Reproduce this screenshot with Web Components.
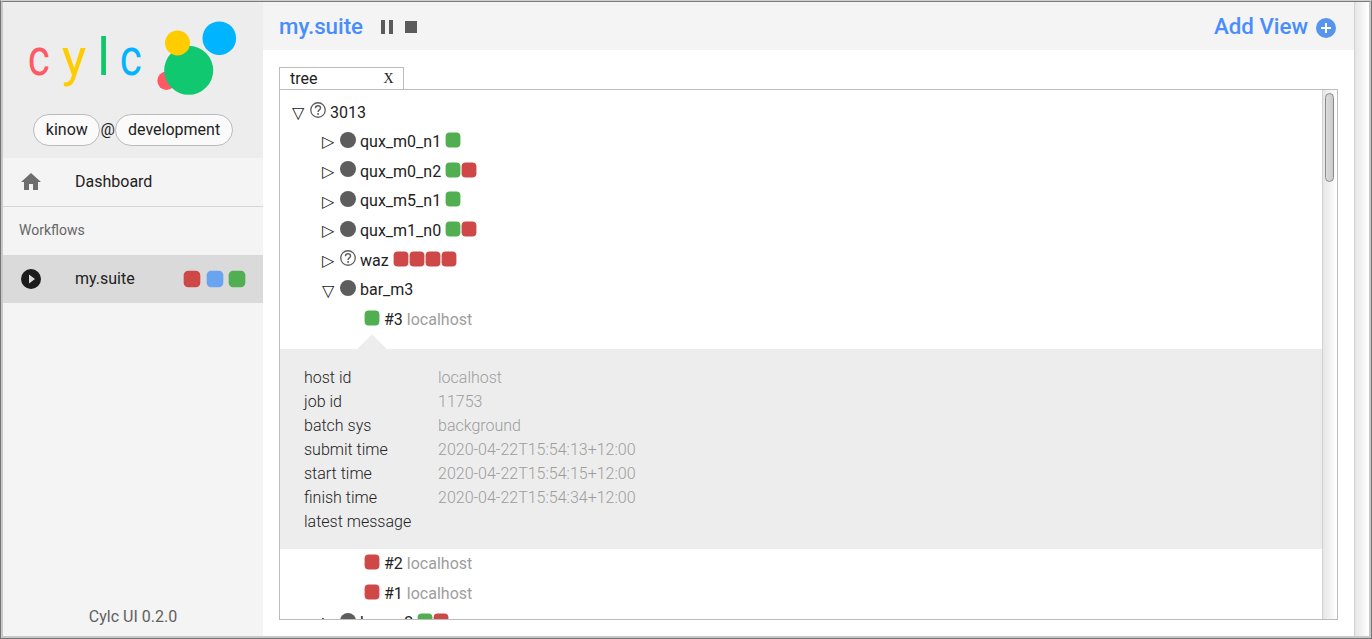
<!DOCTYPE html>
<html lang="en">
<head>
<meta charset="utf-8">
<title>Cylc UI</title>
<style>
html, body { margin: 0; height: 100%; overflow: hidden; }
body { font: 16px/24px Roboto, sans-serif; color: #222; background: #fff; }
</style>
</head>
<body>
<cylc-app></cylc-app>
<script>
const define = (name, html) => customElements.define(name, class extends HTMLElement {
  constructor() {
    super();
    this.attachShadow({ mode: 'open' });
  }
  connectedCallback() {
    const t = document.createElement('template');
    t.innerHTML = typeof html === 'function' ? html(this) : html;
    this.shadowRoot.replaceChildren(t.content.cloneNode(true));
  }
});

/* Rounded square showing a job's state */
define('job-icon', el => `
<style>
:host { display: block; flex: none; width: var(--job-size, 16px); height: var(--job-size, 16px); }
svg { display: block; width: 100%; height: 100%; }
</style>
<svg viewBox="0 0 16 16"><rect x=".6" y=".6" width="14.8" height="14.8" rx="4" fill="${
  { ok: '#51af51', fail: '#cf4848', run: '#6aa4f1' }[el.getAttribute('state')]}"/></svg>`);

define('task-icon', el => `
<style>:host { display: block; flex: none; width: 16px; height: 16px; } svg { display: block; }</style>
<svg width="16" height="16" viewBox="0 0 16 16">${el.getAttribute('state') === 'unknown'
  ? '<circle cx="8" cy="8" r="7.25" fill="none" stroke="#5d5d5d" stroke-width="1.3"/><path d="M5.5 6.2Q5.5 3.8 8 3.8Q10.5 3.8 10.5 6Q10.5 7.1 9.3 7.9Q8.1 8.7 8.1 10" fill="none" stroke="#5d5d5d" stroke-width="1.45"/><circle cx="8.1" cy="12" r=".95" fill="#5d5d5d"/>'
  : '<circle cx="8" cy="8" r="8" fill="#5d5d5d"/>'}</svg>`);

define('cylc-logo', `
<style>:host { display: block; height: 100px; } svg { display: block; }
text { font-family: Roboto, sans-serif; font-size: 52px; font-weight: 400; }</style>
<svg width="260" height="100" viewBox="3 2 260 100">
<text x="27.8" y="75.3" textLength="22" lengthAdjust="spacingAndGlyphs" fill="#ff5966">c</text>
<text x="61.8" y="75.3" textLength="24.5" lengthAdjust="spacingAndGlyphs" fill="#ffcc00">y</text>
<text x="97.2" y="75.3" fill="#10c56c">l</text>
<text x="119.8" y="75.3" textLength="22" lengthAdjust="spacingAndGlyphs" fill="#00b4ff">c</text>
<circle cx="166.5" cy="80.8" r="9.2" fill="#ff5966"/>
<circle cx="188.7" cy="70.3" r="24.5" fill="#10c870"/>
<circle cx="177.5" cy="43" r="12.5" fill="#ffcc00"/>
<circle cx="219.3" cy="38.2" r="16.8" fill="#00b4ff"/>
</svg>`);

define('user-chip', `
<style>:host { display: block; box-sizing: border-box; height: 32px; padding: 0 11.6px; line-height: 30px; border: 1px solid #bbb; border-radius: 16px; background: #fafafa; }</style><slot></slot>`);

define('nav-item', `
<style>
:host { display: flex; align-items: center; box-sizing: border-box; height: 48px; padding: 0 16px; }
:host([active]) { background: #dadada; }
.icon { width: 24px; height: 24px; margin-right: 32px; }
.label { flex: 1; }
</style>
<div class="icon"><slot name="icon"></slot></div><div class="label"><slot></slot></div><slot name="jobs"></slot>`);

define('side-bar', `
<style>
:host { display: flex; flex-direction: column; width: 260px; background: #f4f4f4; }
header { height: 156px; background: #ededed; }
.user { display: flex; justify-content: center; margin-top: 12px; }
.user span { line-height: 31px; width: 15px; }
.sub { height: 48px; line-height: 46px; padding-left: 16px; font-size: 14px; color: #666; border-top: 1px solid #d6d6d6; }
.jobs { display: flex; gap: 4.5px; --job-size: 18px; margin-right: .7px; }
footer { margin-top: auto; text-align: center; height: 31px; color: #606060; }
svg { display: block; }
</style>
<header><cylc-logo></cylc-logo>
<div class="user"><user-chip>kinow</user-chip><span>@</span><user-chip>development</user-chip></div></header>
<nav-item><svg slot="icon" width="24" height="24"><path fill="#6e6e6e" d="M10 20v-6h4v6h5v-8h3L12 3 2 12h3v8z"/></svg>Dashboard</nav-item>
<div class="sub">Workflows</div>
<nav-item active><svg slot="icon" width="24" height="24"><path fill="#1c1c1c" fill-rule="evenodd" d="M12 2a10 10 0 1 0 0 20 10 10 0 0 0 0-20zM10 7.5l6 4.5-6 4.5z"/></svg>my.suite
<div class="jobs" slot="jobs"><job-icon state="fail"></job-icon><job-icon state="run"></job-icon><job-icon state="ok"></job-icon></div></nav-item>
<footer>Cylc UI 0.2.0</footer>`);

define('tool-bar', `
<style>
:host { display: flex; align-items: center; box-sizing: border-box; height: 48px; padding: 2px 16px 0; background: #f4f4f4; color: #478dfd; font-size: 22.3px; font-weight: 500; }
span { margin-bottom: 2px; }
.pause { margin-left: 18px; } .stop { margin-left: 12px; }
.add { margin-left: auto; margin-right: 8px; }
.plus { margin-right: 2px; margin-top: 2px; }
</style>
<span>my.suite</span>
<svg class="pause" width="12" height="14" fill="#5b5b5b"><path d="M0 0h4v14H0zM8 0h4v14H8z"/></svg>
<svg class="stop" width="12" height="12" fill="#5b5b5b"><path d="M0 0h12v12H0z"/></svg>
<span class="add">Add View</span>
<svg class="plus" width="20" height="20"><circle cx="10" cy="10" r="10" fill="#5794ee"/><path d="M10 5v10M5 10h10" stroke="#fff" stroke-width="2"/></svg>`);

/* Expandable row of the task tree */
define('tree-row', el => {
  const depth = +(el.getAttribute('depth') || 0);
  const jobs = (el.getAttribute('jobs') || '').split(' ').filter(Boolean);
  return `
<style>
:host { display: flex; align-items: center; height: 29.67px; padding-left: ${12 + depth * 30}px; white-space: nowrap; }
.toggle { width: 18px; font: 16px/24px "DejaVu Sans", sans-serif; padding-top: .2px; }
task-icon { margin: 0 4px 5px 0; }
.jobs { display: flex; margin: 0 0 4px 4px; }
</style>
<span class="toggle">${el.hasAttribute('open') ? '▽' : '▷'}</span>
<task-icon state="${el.getAttribute('state') || 'waiting'}"></task-icon>
<slot></slot><div class="jobs">${jobs.map(s => `<job-icon state="${s}"></job-icon>`).join('')}</div>`;
});

define('job-row', el => `
<style>
:host { display: flex; align-items: center; height: 29.65px; padding-left: 84px; gap: 4px; }
job-icon { margin-bottom: 4px; } .host { color: #9d9d9d; }
</style>
<job-icon state="${el.getAttribute('state')}"></job-icon><slot></slot><span class="host">localhost</span>`);

define('job-details', `
<style>
:host { display: block; font-weight: 300; margin-top: -.65px; }
.arrow { width: 30px; height: 15px; margin-left: 77px; background: #ededed; clip-path: polygon(50% 0, 100% 100%, 0 100%); }
dl { display: grid; grid-template-columns: 134px 1fr; grid-auto-rows: 24px; margin: 0; padding: 16.6px 24px 15.4px; background: #ededed; }
dt, dd { margin: 0; } dd { color: #9d9d9d; }
</style>
<div class="arrow"></div>
<dl><dt>host id</dt><dd>localhost</dd><dt>job id</dt><dd>11753</dd><dt>batch sys</dt><dd>background</dd>
<dt>submit time</dt><dd>2020-04-22T15:54:13+12:00</dd><dt>start time</dt><dd>2020-04-22T15:54:15+12:00</dd>
<dt>finish time</dt><dd>2020-04-22T15:54:34+12:00</dd><dt>latest message</dt><dd></dd></dl>`);

define('scroll-track', `
<style>
:host { display: block; box-sizing: border-box; flex: none; width: 15px; padding: 3px 3px 0 2px; border-left: 1px solid #d2d2d2; background: linear-gradient(90deg, #e6e6e6, #fff); }
::slotted(*) { box-sizing: border-box; width: 9px; height: 89px; border: 1px solid #8b8b8b; border-radius: 5px; background: linear-gradient(90deg, #dcdcdc, #cacaca); }
</style><slot></slot>`);

define('tree-panel', `
<style>
:host { display: flex; flex-direction: column; box-sizing: border-box; height: 586px; padding: 17px 16px 16px; }
.tab { display: flex; justify-content: space-between; box-sizing: border-box; width: 125px; height: 22px; flex: none; border: 1px solid #bcbcbc; border-bottom: 0; padding: 0 9.5px 0 10px; line-height: 22px; }
.close { font: 14px/21px "Liberation Serif", serif; }
.panel { display: flex; box-sizing: border-box; height: 531px; border: 1px solid #bcbcbc; overflow: hidden; }
.tree { flex: 1; padding-top: 7.7px; overflow: hidden; }
</style>
<div class="tab"><span>tree</span><span class="close">X</span></div>
<div class="panel"><div class="tree">
<tree-row open state="unknown">3013</tree-row>
<tree-row depth="1" jobs="ok">qux_m0_n1</tree-row>
<tree-row depth="1" jobs="ok fail">qux_m0_n2</tree-row>
<tree-row depth="1" jobs="ok">qux_m5_n1</tree-row>
<tree-row depth="1" jobs="ok fail">qux_m1_n0</tree-row>
<tree-row depth="1" state="unknown" jobs="fail fail fail fail">waz</tree-row>
<tree-row depth="1" open>bar_m3</tree-row>
<job-row state="ok">#3</job-row>
<job-details></job-details>
<job-row state="fail">#2</job-row>
<job-row state="fail">#1</job-row>
<tree-row depth="1" jobs="ok fail">bar_m2</tree-row>
</div><scroll-track><div></div></scroll-track></div>`);

define('cylc-app', `
<style>
:host { display: block; box-sizing: border-box; width: 1372px; height: 639px; border: 1px solid #747474; border-top-color: #cfcfcf; }
.frame { display: flex; box-sizing: border-box; height: 637px; border: 2px solid #c8c8c8; border-top: 1px solid #7b7b7b; }
main { flex: 1; min-width: 0; background: #fff; }
</style>
<div class="frame"><side-bar></side-bar><main><tool-bar></tool-bar><tree-panel></tree-panel></main><scroll-track></scroll-track></div>`);
</script>
</body>
</html>
